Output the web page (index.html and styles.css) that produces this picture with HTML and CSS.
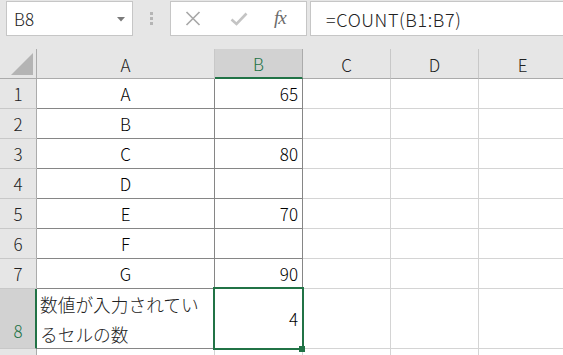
FILE: index.html
```html
<!DOCTYPE html>
<html lang="ja">
<head>
<meta charset="utf-8">
<link rel="stylesheet" href="styles.css">
</head>
<body>
<div class="app">
  <div class="toolbar">
    <div class="namebox">
      <span class="name">B8</span>
      <svg class="dd" width="8" height="5" viewBox="0 0 8 5"><path d="M0 0 H8 L4 4.5 Z" fill="#7a7a7a"/></svg>
    </div>
    <div class="grip"><i></i><i></i><i></i></div>
    <div class="fxbtns">
      <svg class="ico-x" width="16" height="15" viewBox="0 0 16 15"><path d="M1.5 1 L14.5 14 M14.5 1 L1.5 14" stroke="#a9a9a9" stroke-width="1.7" fill="none"/></svg>
      <svg class="ico-ok" width="18" height="14" viewBox="0 0 18 14"><path d="M1.5 7.5 L6.5 12 L16.5 1.5" stroke="#c4c4c4" stroke-width="2.6" fill="none"/></svg>
      <span class="fx">fx</span>
    </div>
    <div class="formula">=COUNT(B1:B7)</div>
  </div>
  <div class="sheet">
    <div class="corner"><span class="tri"></span></div>
    <div class="ch">A</div>
    <div class="ch sel">B</div>
    <div class="ch">C</div>
    <div class="ch">D</div>
    <div class="ch">E</div>

    <div class="rh">1</div><div class="c ca">A</div><div class="c cb">65</div><div class="g"></div><div class="g"></div><div class="g"></div>
    <div class="rh">2</div><div class="c ca">B</div><div class="c cb"></div><div class="g"></div><div class="g"></div><div class="g"></div>
    <div class="rh">3</div><div class="c ca">C</div><div class="c cb">80</div><div class="g"></div><div class="g"></div><div class="g"></div>
    <div class="rh">4</div><div class="c ca">D</div><div class="c cb"></div><div class="g"></div><div class="g"></div><div class="g"></div>
    <div class="rh">5</div><div class="c ca">E</div><div class="c cb">70</div><div class="g"></div><div class="g"></div><div class="g"></div>
    <div class="rh">6</div><div class="c ca">F</div><div class="c cb"></div><div class="g"></div><div class="g"></div><div class="g"></div>
    <div class="rh">7</div><div class="c ca">G</div><div class="c cb">90</div><div class="g"></div><div class="g"></div><div class="g"></div>
    <div class="rh rsel">8</div><div class="c ca wrap">数値が入力されているセルの数</div><div class="c cb mid">4</div><div class="g"></div><div class="g"></div><div class="g"></div>
    <div class="rh"></div><div class="g"></div><div class="g"></div><div class="g"></div><div class="g"></div><div class="g"></div>

    <div class="selbox"></div>
    <div class="handle"></div>
  </div>
</div>
</body>
</html>
```
FILE: styles.css
```css
* { box-sizing: border-box; }
html, body { margin: 0; padding: 0; }
body {
  width: 563px;
  height: 355px;
  overflow: hidden;
  background: #ffffff;
  font-family: "Noto Sans CJK JP", "Noto Sans", sans-serif;
  font-weight: 300;
  color: #000;
}
.app { width: 563px; height: 355px; overflow: hidden; }

.toolbar {
  height: 49px;
  background: #e6e6e6;
  display: flex;
  align-items: flex-start;
  padding-top: 1px;
}
.namebox {
  margin-left: 6px;
  width: 127px;
  height: 35px;
  background: #fff;
  border: 1px solid #c6c6c6;
  display: flex;
  align-items: center;
  justify-content: space-between;
  padding: 0 7px 0 7px;
}
.name { font-size: 17px; color: #222; line-height: 1; }
.dd { margin-top: 1px; }
.grip {
  width: 4px;
  margin-left: 17px;
  margin-top: 11px;
  display: flex;
  flex-direction: column;
  gap: 2px;
}
.grip i { display: block; width: 3px; height: 3px; background: #b5b5b5; }
.fxbtns {
  margin-left: 16px;
  width: 137px;
  height: 35px;
  background: #fff;
  border: 1px solid #c6c6c6;
  display: flex;
  align-items: center;
  padding-left: 14px;
}
.ico-x { margin-right: 29px; }
.ico-ok { margin-right: 26px; }
.fx {
  font-family: "Liberation Serif", "DejaVu Serif", serif;
  font-style: italic;
  font-weight: 400;
  font-size: 19px;
  color: #6b6b6b;
  line-height: 1;
  margin-top: -2px;
  letter-spacing: -1px;
}
.formula {
  margin-left: 3px;
  flex: 1;
  height: 35px;
  background: #fff;
  border: 1px solid #c6c6c6;
  border-right: none;
  font-size: 18px;
  letter-spacing: 0.6px;
  color: #222;
  display: flex;
  align-items: center;
  padding-left: 15px;
}

.sheet {
  position: relative;
  display: grid;
  grid-template-columns: 37px 178px 88px 88px 88px 88px;
  grid-template-rows: 30px repeat(7, 30px) 60px 30px;
  font-size: 17px;
}
.corner {
  background: #e6e6e6;
  border-right: 1px solid #ababab;
  border-bottom: 1px solid #ababab;
  position: relative;
}
.tri {
  position: absolute;
  left: 11px;
  top: 4px;
  width: 0;
  height: 0;
  border-left: 22px solid transparent;
  border-bottom: 22px solid #b4b4b4;
}
.ch {
  background: #e6e6e6;
  border-right: 1px solid #c8c8c8;
  border-bottom: 1px solid #ababab;
  display: flex;
  align-items: center;
  justify-content: center;
  color: #222;
  padding-top: 1px;
}
.ch.sel {
  background: #d2d2d2;
  color: #217346;
  border-bottom: 2px solid #217346;
  border-right-color: #ababab;
}
.rh {
  background: #e6e6e6;
  border-right: 1px solid #ababab;
  border-bottom: 1px solid #c8c8c8;
  display: flex;
  align-items: center;
  justify-content: center;
  color: #222;
}
.rh.rsel {
  background: #d2d2d2;
  color: #217346;
  border-right: 2px solid #217346;
  align-items: flex-end;
  padding-bottom: 5px;
  padding-left: 1px;
}
.c {
  border-right: 1px solid #868686;
  border-bottom: 1px solid #868686;
  display: flex;
  align-items: center;
  line-height: 1;
}
.ca { justify-content: center; }
.cb { justify-content: flex-end; padding-right: 4px; }
.ca.wrap {
  display: block;
  font-size: 17.7px;
  line-height: 30px;
  padding-left: 3px;
  padding-top: 0;
  text-align: left;
  color: #222;
}
.g {
  border-right: 1px solid #d4d4d4;
  border-bottom: 1px solid #d4d4d4;
}
.selbox {
  position: absolute;
  left: 213px;
  top: 238px;
  width: 91px;
  height: 63px;
  border: 2px solid #217346;
  pointer-events: none;
}
.handle {
  position: absolute;
  left: 299px;
  top: 297px;
  width: 6px;
  height: 6px;
  background: #217346;
}
```
